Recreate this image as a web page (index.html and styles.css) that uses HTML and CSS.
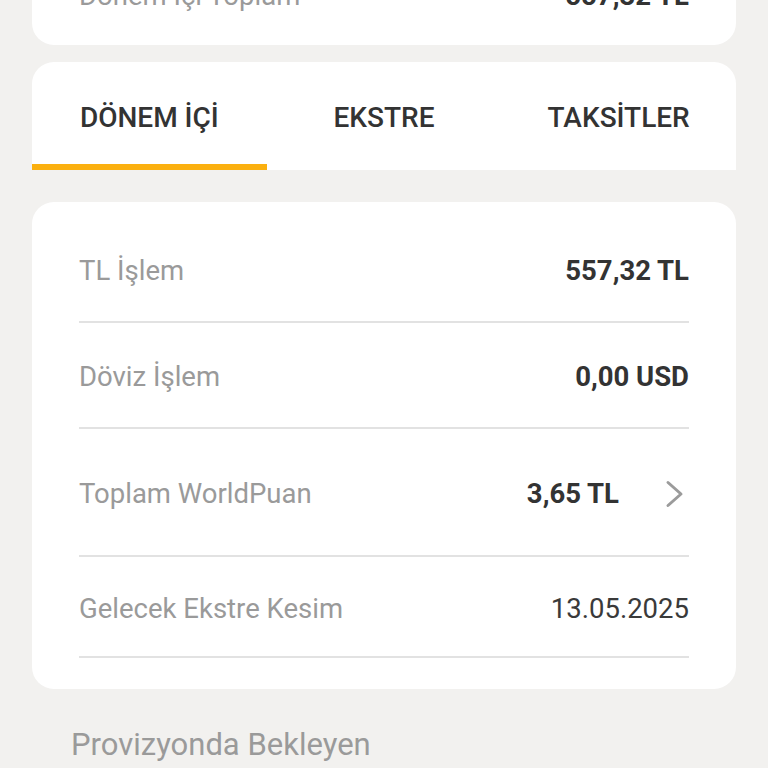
FILE: index.html
```html
<!DOCTYPE html>
<html lang="tr">
<head>
    <meta charset="UTF-8">
    <title>Kart Detayı</title>
    <meta name="viewport" content="width=device-width, initial-scale=1">
    <link rel="stylesheet" href="styles.css">
</head>
<body>
    <div class="page">
        <div class="card summary-card">
            <div class="summary-row">
                <span class="label">Dönem İçi Toplam</span>
                <span class="value">557,32 TL</span>
            </div>
        </div>

        <div class="tabs">
            <div class="tab active">DÖNEM İÇİ</div>
            <div class="tab">EKSTRE</div>
            <div class="tab">TAKSİTLER</div>
        </div>

        <div class="card detail-card">
            <div class="row">
                <span class="label">TL İşlem</span>
                <span class="value">557,32 TL</span>
            </div>
            <div class="row">
                <span class="label">Döviz İşlem</span>
                <span class="value">0,00 USD</span>
            </div>
            <div class="row row-link">
                <span class="label">Toplam WorldPuan</span>
                <span class="value">3,65 TL</span>
                <svg class="chevron" viewBox="0 0 22 28" width="22" height="28">
                    <path d="M4 2.5 L17 14 L4 25.5" fill="none" stroke="#9b9b9b" stroke-width="3" stroke-linecap="round" stroke-linejoin="round"/>
                </svg>
            </div>
            <div class="row last">
                <span class="label">Gelecek Ekstre Kesim</span>
                <span class="value light">13.05.2025</span>
            </div>
        </div>

        <div class="section-title">Provizyonda Bekleyen</div>
    </div>
</body>
</html>
```

FILE: styles.css
```css
body {
    background: #f2f1ef;
    font-family: Roboto, 'Noto Sans', sans-serif;
    margin: 0;
    padding: 0;
    overflow: hidden;
}
.page {
    padding: 0 32px;
}
.card {
    background: #fff;
    border-radius: 22px;
}
/* top summary card, scrolled partly out of view */
.summary-card {
    margin-top: -55px;
    padding: 36px 47px 34px 47px;
}
.summary-row {
    display: flex;
    justify-content: space-between;
    align-items: center;
    height: 30px;
    line-height: 30px;
}
.summary-row .label {
    font-size: 27.5px;
    color: #9a9a9a;
}
.summary-row .value {
    font-size: 27.5px;
    font-weight: 700;
    color: #333;
}
/* Tabs */
.tabs {
    margin-top: 17px;
    background: #fff;
    border-radius: 22px 22px 0 0;
    display: flex;
    height: 108px;
}
.tab {
    flex: 1;
    display: flex;
    align-items: center;
    justify-content: center;
    font-size: 28px;
    font-weight: 500;
    color: #333;
    padding-top: 8px;
    box-sizing: border-box;
    border-bottom: 6px solid transparent;
}
.tab.active {
    border-bottom-color: #fbb00f;
}
/* Detail card */
.detail-card {
    margin-top: 32px;
    padding: 15px 47px 31px 47px;
}
.row {
    display: flex;
    align-items: center;
    height: 106px;
    padding-top: 3px;
    box-sizing: border-box;
    border-bottom: 2px solid #e2e2e2;
}
.row-link {
    height: 128px;
}
.row.last {
    height: 101px;
}
.row .label {
    flex: 1;
    font-size: 27.5px;
    color: #9a9a9a;
}
.row .value {
    font-size: 27.5px;
    font-weight: 700;
    color: #333;
}
.row .value.light {
    font-weight: 400;
    color: #3a3a3a;
}
.chevron {
    margin-left: 45px;
    margin-right: 3px;
}
.section-title {
    margin: 37px 0 0 39px;
    font-size: 31px;
    color: #9a9a9a;
}
```
